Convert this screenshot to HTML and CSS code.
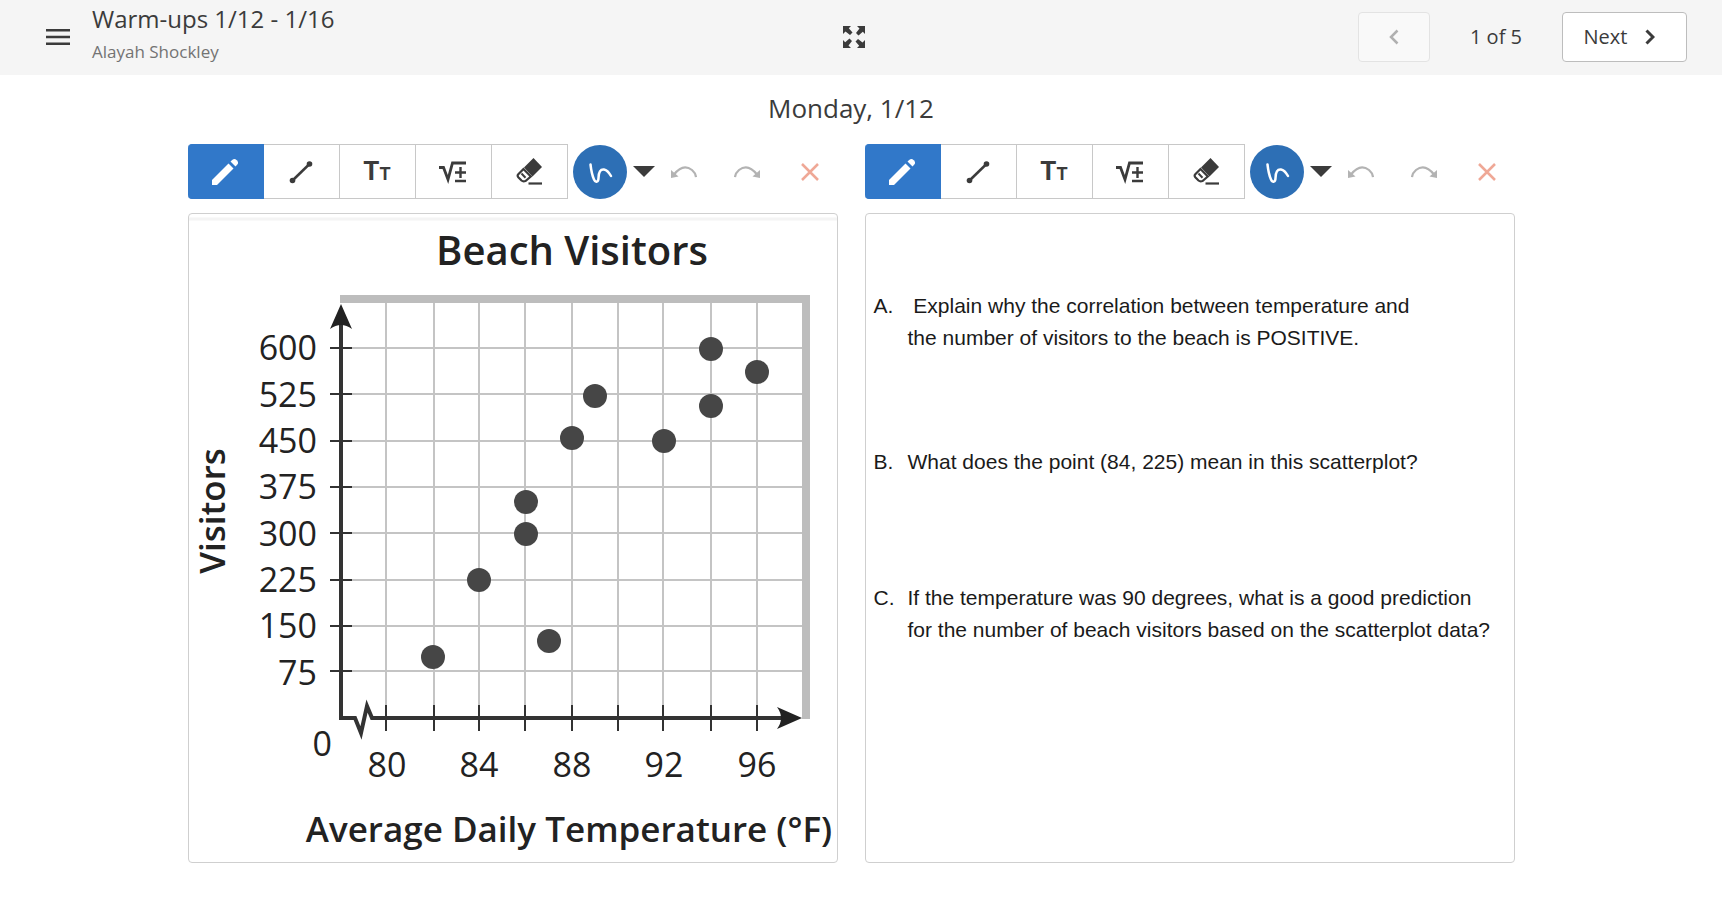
FILE: index.html
```
<!DOCTYPE html>
<html lang="en">
<head>
    <meta charset="UTF-8">
    <meta name="viewport" content="width=device-width, initial-scale=1.0">
    <title>Warm-ups 1/12 - 1/16</title>
    <link rel="stylesheet" href="styles.css">
</head>
<body>

    <!-- Shared icons -->
    <svg class="sprite" aria-hidden="true">
        <symbol id="icon-pencil" viewBox="0 0 26 26">
            <path d="M0 26v-5L16.500 4.500l5 5L5 26z" fill="#fff"/>
            <path d="M18.500 2.500L20.500.800Q22.500-.800 24.800 1.300Q27 3.500 25.300 5.500L23.500 7.500z" fill="#fff"/>
        </symbol>
        <symbol id="icon-line" viewBox="0 0 26 26">
            <path d="M4.500 21.500L21.500 5" stroke="#3b3b3b" stroke-width="2.500"/>
            <circle cx="4.500" cy="21.500" r="2.800" fill="#3b3b3b"/>
            <circle cx="21.500" cy="5" r="2.800" fill="#3b3b3b"/>
        </symbol>
        <symbol id="icon-math" viewBox="0 0 28 26">
            <path d="M0 8.500h4.500l4.500 12L13.500 4H27" fill="none" stroke="#3b3b3b" stroke-width="2.800"/>
            <path d="M16 13.500h11M21.500 8v11M16 22h11" stroke="#3b3b3b" stroke-width="2.400"/>
        </symbol>
        <symbol id="icon-eraser" viewBox="0 0 26 27">
            <path d="M17.500 0L26 9l-9.500 9.500L8 9.500z" fill="#3b3b3b"/>
            <path d="M7.500 11L2.300 16.300Q1 17.700 2.300 19.200L5.500 22.500Q7 23.800 9.500 23L14.800 18.500z" fill="none" stroke="#3b3b3b" stroke-width="2.200"/>
            <path d="M5.500 15.500L9.500 19.700" stroke="#3b3b3b" stroke-width="2"/>
            <path d="M12.500 25.500H26" stroke="#3b3b3b" stroke-width="2.200"/>
        </symbol>
        <symbol id="icon-squiggle" viewBox="0 0 54 54">
            <path d="M17.500 19.500C18 24 19 30 21 34.500C22.500 38 25.500 37 25.500 33C25.500 27 27.500 24 31 24.500C34.500 25 36 27.500 38 31" fill="none" stroke="#fff" stroke-width="2.500" stroke-linecap="round"/>
        </symbol>
        <symbol id="icon-caret" viewBox="0 0 22 11">
            <path d="M0 0h22L11 11z" fill="#3b3b3b"/>
        </symbol>
        <symbol id="icon-undo" viewBox="0 0 26 12">
            <path d="M3 8.500Q12-3 21 4Q24.500 7 25 11" fill="none" stroke="#b3b3b3" stroke-width="2.200"/>
            <path d="M0 4V12L7.500 10.500z" fill="#b3b3b3"/>
        </symbol>
        <symbol id="icon-redo" viewBox="0 0 26 12">
            <path d="M23 8.500Q14-3 5 4Q1.500 7 1 11" fill="none" stroke="#b3b3b3" stroke-width="2.200"/>
            <path d="M26 4V12l-7.500-1.500z" fill="#b3b3b3"/>
        </symbol>
        <symbol id="icon-clear" viewBox="0 0 18 18">
            <path d="M1 1l16 16M17 1L1 17" stroke="#efa896" stroke-width="2.500"/>
        </symbol>
    </svg>

    <header class="header">
        <div class="header-left">
            <button class="menu-btn" aria-label="Menu">
                <svg width="24" height="16" viewBox="0 0 24 16"><path d="M0 1.200h24M0 8h24M0 14.800h24" stroke="#3b3b3b" stroke-width="2.400"/></svg>
            </button>
            <div class="heading">
                <h1 class="title">Warm-ups 1/12 - 1/16</h1>
                <p class="author">Alayah Shockley</p>
            </div>
        </div>
        <button class="expand-btn" aria-label="Full screen">
            <svg width="22" height="22" viewBox="0 0 22 22" fill="#3b3b3b">
                <path id="arrow" d="M0 0h8L5.800 2.200 9.500 6.500 7 9 2.500 5.500 0 8z"/>
                <use href="#arrow" transform="rotate(90 11 11)"/>
                <use href="#arrow" transform="rotate(180 11 11)"/>
                <use href="#arrow" transform="rotate(270 11 11)"/>
            </svg>
        </button>
        <nav class="pager">
            <button class="page-btn prev-btn" aria-label="Previous" disabled>
                <svg width="10" height="16" viewBox="0 0 10 16"><path d="M8.500 1.500L2 8l6.500 6.500" fill="none" stroke="#b0b0b0" stroke-width="2.500"/></svg>
            </button>
            <span class="page-count">1 of 5</span>
            <button class="page-btn next-btn">
                Next
                <svg width="10" height="16" viewBox="0 0 10 16"><path d="M1.500 1.500L8 8l-6.500 6.500" fill="none" stroke="#3b3b3b" stroke-width="3"/></svg>
            </button>
        </nav>
    </header>

    <main class="main">
        <h2 class="day">Monday, 1/12</h2>

        <div class="boards">
            <!-- Scatterplot board -->
            <section class="board">
                <div class="toolbar">
                    <div class="tools">
                        <button class="tool active" aria-label="Pencil"><svg width="26" height="26"><use href="#icon-pencil"/></svg></button>
                        <button class="tool" aria-label="Line"><svg width="26" height="26"><use href="#icon-line"/></svg></button>
                        <button class="tool text-tool" aria-label="Text"><span class="big-t">T</span><span class="small-t">T</span></button>
                        <button class="tool" aria-label="Math"><svg width="28" height="26"><use href="#icon-math"/></svg></button>
                        <button class="tool" aria-label="Eraser"><svg width="26" height="27"><use href="#icon-eraser"/></svg></button>
                    </div>
                    <button class="pen-style" aria-label="Pen style"><svg width="54" height="54"><use href="#icon-squiggle"/></svg></button>
                    <button class="caret" aria-label="Pen options"><svg width="22" height="11"><use href="#icon-caret"/></svg></button>
                    <div class="history">
                        <button aria-label="Undo"><svg width="26" height="12"><use href="#icon-undo"/></svg></button>
                        <button aria-label="Redo"><svg width="26" height="12"><use href="#icon-redo"/></svg></button>
                        <button aria-label="Clear"><svg width="18" height="18"><use href="#icon-clear"/></svg></button>
                    </div>
                </div>
                <div class="canvas">
                    <svg class="chart" viewBox="0 0 648 648" role="img" aria-label="Beach Visitors scatterplot">
                        <path d="M0 5h648" stroke="#f4f4f4" stroke-width="3"/>
                        <text x="383" y="51" class="chart-title">Beach Visitors</text>

                        <!-- grid -->
                        <path class="grid" d="M197 88V504M245 88V504M290 88V504M336 88V504M383 88V504M429 88V504M474 88V504M522 88V504M568 88V504"/>
                        <path class="grid" d="M152 134H613M152 180H613M152 227H613M152 273H613M152 319H613M152 366H613M152 412H613M152 457H613"/>
                        <path d="M151 85H617V505" fill="none" stroke="#bdbdbd" stroke-width="8"/>

                        <!-- axes -->
                        <path class="tick" d="M141 134h22M141 180h22M141 227h22M141 273h22M141 319h22M141 366h22M141 412h22M141 457h22"/>
                        <path class="tick" d="M197 491v26M245 491v26M290 491v26M336 491v26M383 491v26M429 491v26M474 491v26M522 491v26M568 491v26"/>
                        <path class="axis" d="M152 108V504H166L172 519L178 492L183 504H595"/>
                        <path d="M152 90L163 115Q152 107 141 115z" fill="#222"/>
                        <path d="M613 504L588 493Q596 504 588 515z" fill="#222"/>

                        <g class="num y-num">
                            <text x="128" y="146">600</text>
                            <text x="128" y="193">525</text>
                            <text x="128" y="239">450</text>
                            <text x="128" y="285">375</text>
                            <text x="128" y="332">300</text>
                            <text x="128" y="378">225</text>
                            <text x="128" y="424">150</text>
                            <text x="128" y="471">75</text>
                            <text x="143" y="542">0</text>
                        </g>
                        <g class="num x-num">
                            <text x="198" y="563">80</text>
                            <text x="290" y="563">84</text>
                            <text x="383" y="563">88</text>
                            <text x="475" y="563">92</text>
                            <text x="568" y="563">96</text>
                        </g>
                        <text x="380" y="628" class="axis-title">Average Daily Temperature (°F)</text>
                        <text x="-297" y="36" transform="rotate(-90)" class="axis-title">Visitors</text>

                        <!-- data points -->
                        <g fill="#464646">
                            <circle cx="244" cy="443" r="12"/>
                            <circle cx="290" cy="366" r="12"/>
                            <circle cx="337" cy="320" r="12"/>
                            <circle cx="337" cy="288" r="12"/>
                            <circle cx="360" cy="427" r="12"/>
                            <circle cx="383" cy="224" r="12"/>
                            <circle cx="406" cy="182" r="12"/>
                            <circle cx="475" cy="227" r="12"/>
                            <circle cx="522" cy="135" r="12"/>
                            <circle cx="522" cy="192" r="12"/>
                            <circle cx="568" cy="158" r="12"/>
                        </g>
                    </svg>
                </div>
            </section>

            <!-- Questions board -->
            <section class="board">
                <div class="toolbar">
                    <div class="tools">
                        <button class="tool active" aria-label="Pencil"><svg width="26" height="26"><use href="#icon-pencil"/></svg></button>
                        <button class="tool" aria-label="Line"><svg width="26" height="26"><use href="#icon-line"/></svg></button>
                        <button class="tool text-tool" aria-label="Text"><span class="big-t">T</span><span class="small-t">T</span></button>
                        <button class="tool" aria-label="Math"><svg width="28" height="26"><use href="#icon-math"/></svg></button>
                        <button class="tool" aria-label="Eraser"><svg width="26" height="27"><use href="#icon-eraser"/></svg></button>
                    </div>
                    <button class="pen-style" aria-label="Pen style"><svg width="54" height="54"><use href="#icon-squiggle"/></svg></button>
                    <button class="caret" aria-label="Pen options"><svg width="22" height="11"><use href="#icon-caret"/></svg></button>
                    <div class="history">
                        <button aria-label="Undo"><svg width="26" height="12"><use href="#icon-undo"/></svg></button>
                        <button aria-label="Redo"><svg width="26" height="12"><use href="#icon-redo"/></svg></button>
                        <button aria-label="Clear"><svg width="18" height="18"><use href="#icon-clear"/></svg></button>
                    </div>
                </div>
                <div class="canvas questions">
                    <div class="question">
                        <span class="letter">A.</span>
                        <p>&nbsp;Explain why the correlation between temperature and<br>the number of visitors to the beach is POSITIVE.</p>
                    </div>
                    <div class="question question-short">
                        <span class="letter">B.</span>
                        <p>What does the point (84, 225) mean in this scatterplot?</p>
                    </div>
                    <div class="question">
                        <span class="letter">C.</span>
                        <p>If the temperature was 90 degrees, what is a good prediction<br>for the number of beach visitors based on the scatterplot data?</p>
                    </div>
                </div>
            </section>
        </div>
    </main>

</body>
</html>
```
FILE: styles.css
```
* {
    box-sizing: border-box;
}
body {
    margin: 0;
    font-family: "Open Sans", "Noto Sans", sans-serif;
    color: #3b3b3b;
    background-color: #fff;
}
h1, h2, p {
    margin: 0;
    font-weight: normal;
}
button {
    padding: 0;
    border: none;
    background: none;
    font-family: inherit;
    color: inherit;
    cursor: pointer;
}
svg {
    display: block;
}
.sprite {
    position: absolute;
    width: 0;
    height: 0;
}

/* Header */
.header {
    display: grid;
    grid-template-columns: 1fr auto 1fr;
    align-items: center;
    height: 75px;
    padding: 0 35px 2px 20px;
    background-color: #f5f5f5;
}
.header-left {
    display: flex;
    align-items: center;
}
.menu-btn {
    padding: 14px 22px 14px 26px;
}
.heading {
    padding: 1px 0 5px;
}
.title {
    font-size: 24px;
    line-height: 34px;
}
.author {
    font-size: 17px;
    line-height: 32px;
    color: #737373;
}
.pager {
    display: flex;
    justify-content: flex-end;
    align-items: center;
}
.page-btn {
    display: flex;
    align-items: center;
    justify-content: center;
    height: 50px;
    border: 1px solid #bdbdbd;
    border-radius: 4px;
    background-color: #fff;
    font-size: 20px;
}
.prev-btn {
    width: 72px;
    border-color: #e3e3e3;
    background-color: #f9f9f9;
    cursor: default;
}
.next-btn {
    gap: 18px;
    width: 125px;
    padding-right: 10px;
}
.page-count {
    width: 132px;
    text-align: center;
    font-size: 20px;
}

/* Main */
.main {
    padding: 15px 20px 50px 0;
}
.day {
    margin-bottom: 18px;
    font-size: 26px;
    line-height: 36px;
    text-align: center;
}
.boards {
    display: grid;
    grid-template-columns: 1fr 1fr;
    gap: 27px;
    max-width: 1327px;
    margin: 0 auto;
}

/* Toolbar */
.toolbar {
    display: flex;
    align-items: center;
    margin-bottom: 14px;
}
.tools {
    display: flex;
}
.tool {
    display: flex;
    align-items: center;
    justify-content: center;
    width: 76px;
    height: 55px;
    border: 1px solid #c8c8c8;
    border-left: none;
}
.tool.active {
    border-color: #3178c9;
    border-radius: 4px 0 0 4px;
    background-color: #3178c9;
}
.text-tool {
    align-items: baseline;
    padding-top: 10px;
    font-family: Roboto, sans-serif;
    font-weight: bold;
    line-height: 32px;
}
.big-t {
    font-size: 26px;
}
.small-t {
    font-size: 18px;
}
.pen-style {
    margin-left: 5px;
    border-radius: 50%;
    background-color: #2d6fb5;
}
.caret {
    margin-left: 6px;
}
.history {
    display: flex;
    align-items: center;
    gap: 37px;
    margin-left: 16px;
}
.history button {
    display: flex;
    justify-content: center;
    width: 26px;
}

/* Boards */
.canvas {
    aspect-ratio: 1;
    border: 1px solid #cfcfcf;
    border-radius: 4px;
    overflow: hidden;
}
.chart {
    width: 100%;
    height: 100%;
    fill: #222;
}
.chart-title {
    font-size: 40px;
    font-weight: 600;
    text-anchor: middle;
}
.axis-title {
    font-size: 35px;
    font-weight: 600;
    text-anchor: middle;
}
.num {
    font-size: 34px;
}
.y-num {
    text-anchor: end;
}
.x-num {
    text-anchor: middle;
}
.grid {
    stroke: #c4c4c4;
    stroke-width: 2;
}
.tick {
    stroke: #333;
    stroke-width: 2;
}
.axis {
    fill: none;
    stroke: #333;
    stroke-width: 4;
}

/* Questions */
.questions {
    display: flex;
    flex-direction: column;
    gap: 92px;
    padding: 76px 8px;
    font-family: "Liberation Sans", Arial, sans-serif;
    font-size: 21px;
    line-height: 32px;
    color: #1a1a1a;
    white-space: nowrap;
}
.question {
    display: flex;
}
.question-short {
    padding-bottom: 12px;
}
.letter {
    width: 34px;
}
```
